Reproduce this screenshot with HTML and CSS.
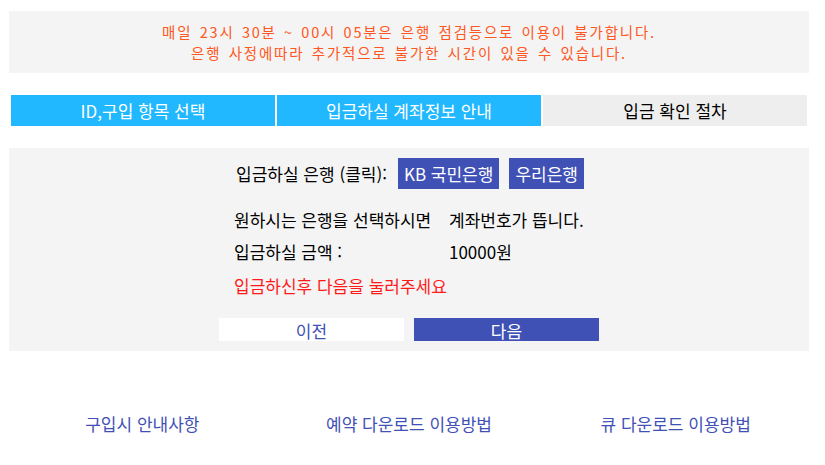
FILE: index.html
```html
<!DOCTYPE html>
<html lang="ko">
<head>
<meta charset="utf-8">
<link rel="stylesheet" href="styles.css">
</head>
<body>
<div class="page">
  <div class="notice">
    <p>매일 23시 30분 ~ 00시 05분은 은행 점검등으로 이용이 불가합니다.</p>
    <p>은행 사정에따라 추가적으로 불가한 시간이 있을 수 있습니다.</p>
  </div>
  <div class="tabs">
    <div class="tab done">ID,구입 항목 선택</div>
    <div class="tab done">입금하실 계좌정보 안내</div>
    <div class="tab current">입금 확인 절차</div>
  </div>
  <div class="panel">
    <div class="bank-row">
      <span class="bank-label">입금하실 은행 (클릭):</span>
      <button class="bank">KB 국민은행</button>
      <button class="bank">우리은행</button>
    </div>
    <div class="info">
      <div class="info-row"><span class="k">원하시는 은행을 선택하시면</span><span class="v">계좌번호가 뜹니다.</span></div>
      <div class="info-row"><span class="k">입금하실 금액 :</span><span class="v">10000원</span></div>
      <div class="info-row warn">입금하신후 다음을 눌러주세요</div>
    </div>
    <div class="nav">
      <button class="btn prev">이전</button>
      <button class="btn next">다음</button>
    </div>
  </div>
  <div class="links">
    <a class="link">구입시 안내사항</a>
    <a class="link">예약 다운로드 이용방법</a>
    <a class="link">큐 다운로드 이용방법</a>
  </div>
</div>
</body>
</html>
```
FILE: styles.css
```css
* { box-sizing: border-box; }
body {
  margin: 0;
  font-family: "Noto Sans CJK KR", "Noto Sans", sans-serif;
  font-size: 17px;
  color: #000;
  background: #fff;
}
.page {
  width: 800px;
  margin-left: 9px;
  padding-top: 11px;
}
.notice {
  background: #f4f4f4;
  height: 62px;
  padding-top: 10px;
  text-align: center;
  color: #ff5722;
  font-size: 14.5px;
  line-height: 21px;
  letter-spacing: 1.8px;
  word-spacing: 1.5px;
}
.notice p { margin: 0; }
.tabs {
  display: flex;
  gap: 2px;
  padding: 0 2px;
  margin-top: 22px;
}
.tab {
  flex: 1;
  height: 31px;
  display: flex;
  align-items: center;
  justify-content: center;
  font-size: 17px;
}
.tab.done { background: #21b8ff; color: #fff; }
.tab.current { background: #eeeeee; color: #000; }
.panel {
  margin-top: 22px;
  background: #f4f4f4;
  padding: 10px 0 10px;
}
.bank-row {
  display: flex;
  justify-content: center;
  align-items: center;
  gap: 10px;
  padding-left: 2px;
}
.bank-label { margin-right: 1px; }
button {
  font-family: inherit;
  border: 0;
  padding: 0;
  cursor: pointer;
}
.bank {
  height: 31px;
  padding: 0 6px;
  background: #3f51b5;
  color: #fff;
  font-size: 17px;
}
.info {
  width: 352px;
  margin: 14px auto 0;
  padding-left: 1px;
}
.info-row {
  display: flex;
  height: 32px;
  align-items: center;
}
.info-row .k { width: 215px; }
.warn { color: #ff1a1a; height: 34px; padding-top: 3px; }
.nav {
  display: flex;
  justify-content: center;
  gap: 10px;
  margin-top: 17px;
}
.btn {
  width: 185px;
  height: 23px;
  font-size: 17px;
}
.prev { background: #fff; color: #3f51b5; }
.next { background: #3f51b5; color: #fff; }
.links {
  display: flex;
  margin-top: 60px;
}
.link {
  flex: 1;
  text-align: center;
  color: #3f51b5;
  font-size: 17px;
}
```
